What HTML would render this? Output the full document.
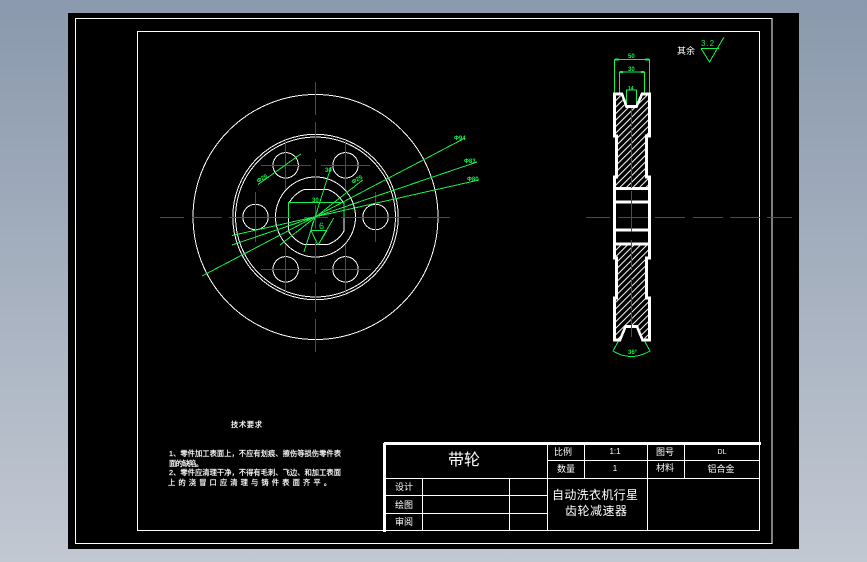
<!DOCTYPE html>
<html><head><meta charset="utf-8"><style>
html,body{margin:0;padding:0;width:867px;height:562px;overflow:hidden;background:linear-gradient(#8a99ad,#c2c8d2)}
svg{position:absolute;left:0;top:0;display:block}
text{font-family:"Liberation Sans","WenQuanYi Zen Hei","Noto Sans CJK SC",sans-serif;fill:#fff}
.g text,text.g{fill:#14f04a}
.n text{stroke:#fff;stroke-width:.2}
</style></head><body>
<svg width="867" height="562" viewBox="0 0 867 562" xmlns="http://www.w3.org/2000/svg">
<defs><pattern id="h" width="4.6" height="4.6" patternUnits="userSpaceOnUse" patternTransform="rotate(45)"><rect width="4.6" height="4.6" fill="#000"/><rect width="1" height="4.6" fill="#fff"/></pattern></defs>
<rect x="68" y="13" width="731" height="536" fill="#000"/>
<g shape-rendering="crispEdges">
<rect x="75.5" y="18.5" width="696.5" height="525" fill="none" stroke="#fff"/>
<rect x="137.5" y="31.5" width="622" height="499" fill="none" stroke="#fff"/>

<g fill="none" stroke="#fff" stroke-width="1">
<circle cx="315.5" cy="217" r="122.5"/><circle cx="315.5" cy="217" r="82.7"/><circle cx="315.5" cy="217" r="80"/><circle cx="315.5" cy="217" r="40"/>
<circle cx="255.5" cy="217" r="12.7"/><circle cx="375.5" cy="217" r="12.7"/>
<circle cx="285.7" cy="165.3" r="12.7"/><circle cx="345.5" cy="165.3" r="12.7"/><circle cx="285.7" cy="269.3" r="12.7"/><circle cx="345.5" cy="269.3" r="12.7"/>
<path d="M304 189.5H328A31 31 0 0 1 344 204V231A31 31 0 0 1 328 244.5H304A31 31 0 0 1 288.5 231V204A31 31 0 0 1 304 189.5Z"/>
</g>
<g stroke="#ff0000" stroke-width="1" fill="none">
<path d="M160 217.5H184M192 217.5H222M229 217.5H291M304 217.5H328M341 217.5H411M418 217.5H450"/>
<path d="M315.5 82V115M315.5 122V152M315.5 159V189M315.5 205V229M315.5 242V274M315.5 282V312M315.5 319V352"/>
<path d="M255.5 192V242M375.5 192V242M261 165.5H311M321 165.5H370M261 269.5H311M321 269.5H371M285.7 140V190M345.5 140V190M285.7 245V294M345.5 245V294"/>
</g>
<g stroke="#14f04a" stroke-width="1" fill="none">
<path d="M202 276L465 138M232 245L477 162M232 235.5L479 180M258 184.5L300.7 154M280 245L362.7 180M304 252L331 167M318 245L333.7 218"/>
<path d="M288.5 217V202.5H344V217M311 230.5H327M311 230.5L318 245M327 230.5L318 245M311 230.5L313 222"/>
</g>
<g class="g" font-size="6" font-weight="bold">
<text x="454" y="140">Φ94</text><text x="464" y="163">Φ83</text><text x="467" y="181">Φ80</text>
<text x="258" y="183" transform="rotate(-30 258 183)">Φ25</text><text x="353" y="184" transform="rotate(-30 353 184)">Φ25</text>
<text x="325" y="172">30</text><text x="312" y="202">30</text>
<text x="319" y="229" font-size="9" font-weight="normal">6</text>
<text x="701" y="46" font-size="8" font-weight="normal" letter-spacing="1">3.2</text>
<text x="628" y="58">50</text><text x="628" y="71">30</text><text x="628" y="90" font-size="5">14</text>
<text x="628" y="354">36°</text>
</g>
<g stroke="#14f04a" stroke-width="1" fill="none">
<path d="M701 48.5H719M701 48.5L709.5 62L724 37"/>
<path d="M614.5 94V59.5H649.5V94M619.5 94V72H644.5V94M626.5 106V90H636.5V106"/>
<path d="M619 340L613 351Q631 362 650 351L644 340"/>
<path d="M615 59.5h4M645 59.5h4M620 72h3M641 72h3" stroke-width="2"/>
</g>

<path d="M616 94H620L626 108H637L643 94H648V136H646V177H648V189H616V177H617V136H616Z" fill="url(#h)"/>
<path d="M616 244H648V258H646V298H648V340H643L637 326H625L620 340H616V298H617V258H616Z" fill="url(#h)"/>
<g stroke="#fff" stroke-width="2.6" fill="none">
<path d="M622 94H614.5V136H616.5V177H614.5V258H616.5V298H614.5V340H620L625.5 326.5H637L642.5 340H649.5V298H646.5V258H649.5V177H646.5V136H649.5V94H642L636.5 106.5H626.5Z"/>
<path d="M615 188.5H649M615 202H649M615 230H649M615 244H649"/>
</g>
<g stroke="#ff0000" stroke-width="1" fill="none">
<path d="M586 217.5H610M618 217.5H648M655 217.5H685M693 217.5H723M730 217.5H760M767 217.5H792"/>
<path d="M631.5 108V127M631.5 128V155M631.5 158V188M631.5 191V207M631.5 204V232M631.5 240V270M631.5 278V310M631.5 312V337"/>
</g>

<g stroke="#fff" fill="none" stroke-width="1">
<path d="M384 478.5H760M384 495.5H548M384 513.5H548M384 530.5H760M548 460.5H760"/>
<path d="M422.5 478V530M509.5 478V530M547.5 443V530M584.5 443V478M647.5 443V530M684.5 443V478M759.5 443V530"/>
</g>
<path d="M384 443.5H761M384.5 443V532" stroke="#fff" stroke-width="2.6" fill="none"/>
</g>

<text x="464" y="465" font-size="16" text-anchor="middle">带轮</text>
<g font-size="9" text-anchor="middle">
<text x="563" y="455">比例</text><text x="566" y="472">数量</text><text x="615" y="454" font-size="8">1:1</text><text x="615" y="471" font-size="8">1</text>
<text x="665" y="455">图号</text><text x="665" y="471">材料</text><text x="722" y="454" font-size="7">DL</text><text x="721" y="472">铝合金</text>
<text x="404" y="490">设计</text><text x="404" y="508">绘图</text><text x="404" y="525">审阅</text>
<text x="686" y="54" font-size="9">其余</text>
</g>
<text x="552" y="499" font-size="12" textLength="86">自动洗衣机行星</text>
<text x="565" y="515" font-size="12" textLength="62">齿轮减速器</text>
<g class="n" font-size="7.3">
<text x="231" y="427" textLength="31">技术要求</text>
<text x="169" y="456" textLength="172">1、零件加工表面上，不应有划痕、擦伤等损伤零件表</text>
<text x="169" y="466" textLength="34">面的缺陷。</text>
<text x="169" y="475" textLength="172">2、零件应清理干净，不得有毛刺、飞边、和加工表面</text>
<text x="168" y="485" textLength="163">上的浇冒口应清理与铸件表面齐平。</text>
</g>
</svg>
</body></html>
